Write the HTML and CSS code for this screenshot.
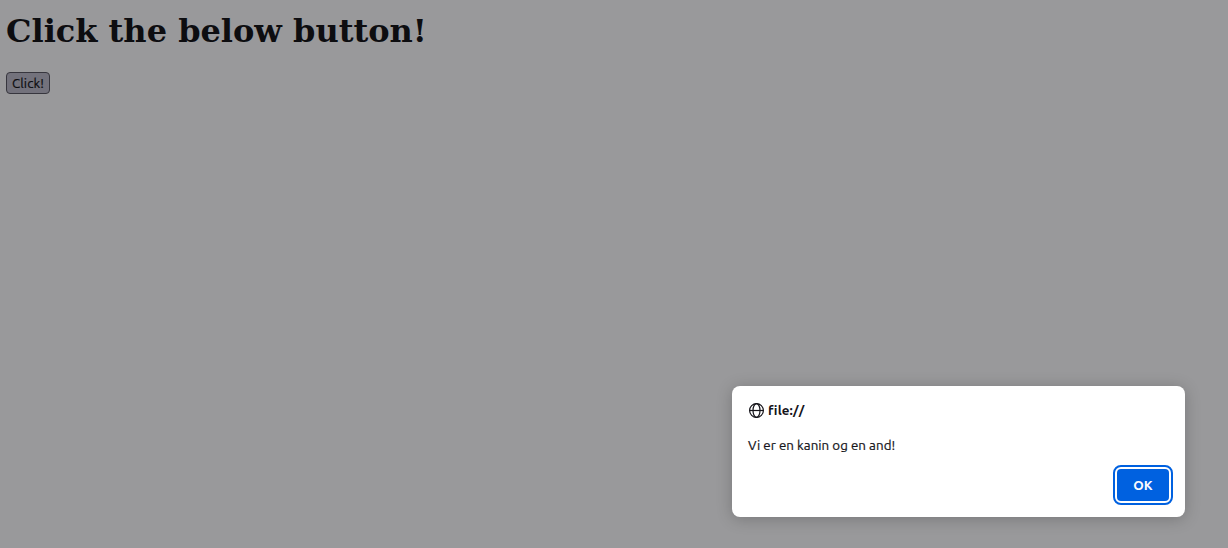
FILE: index.html
```html
<!DOCTYPE html>
<html lang="en">
<head>
<meta charset="utf-8">
<title>Click</title>
<link rel="stylesheet" href="styles.css">
</head>
<body>
<main class="page">
  <h1 class="title">Click the below button!</h1>
  <button class="click">Click!</button>
</main>
<div class="dialog" role="dialog">
  <div class="origin">
    <svg class="globe" viewBox="0 0 16 16" width="16" height="16" fill="none" stroke="#15141a" stroke-width="1.2">
      <circle cx="8.5" cy="8.5" r="6.9"/>
      <ellipse cx="8.5" cy="8.5" rx="3.5" ry="6.9"/>
      <path d="M1.6 8.5h13.8"/>
    </svg>
    <span class="host">file://</span>
  </div>
  <p class="message">Vi er en kanin og en and!</p>
  <div class="actions"><button class="ok">OK</button></div>
</div>
</body>
</html>
```
FILE: styles.css
```css
* { box-sizing: border-box; }
body {
  margin: 0;
  height: 548px;
  overflow: hidden;
  background: #99999b;
  color: #0d0d10;
  font-family: "DejaVu Serif", serif;
}
.page { padding: 12px 6px; }
.title {
  margin: 0 0 21px;
  font-size: 32px;
  line-height: 39px;
  font-weight: bold;
  white-space: nowrap;
}
.click {
  display: block;
  width: 44px;
  height: 22px;
  padding: 1px 0 0;
  border: 1px solid #37363e;
  border-radius: 4px;
  background: #73727c;
  color: #0d0d10;
  font: 13.333px/19px "Ubuntu", "Noto Sans", sans-serif;
  letter-spacing: .05px;
  -webkit-text-stroke: .2px;
  white-space: nowrap;
}
.dialog {
  position: absolute;
  left: 732px;
  top: 386px;
  width: 453px;
  height: 131px;
  padding: 15px 16px 16px;
  border-radius: 8px;
  background: #fff;
  box-shadow: 0 2px 16px rgba(0, 0, 0, .22);
  color: #15141a;
  font: 13.333px/18px "Ubuntu", "Noto Sans", sans-serif;
}
.origin {
  display: flex;
  align-items: center;
  gap: 4px;
  height: 18px;
  font-weight: bold;
}
.host {
  padding-top: 2px;
  letter-spacing: .1px;
}
.message {
  margin: 18px 0 14px;
  letter-spacing: .04px;
  -webkit-text-stroke: .2px;
}
.actions {
  display: flex;
  justify-content: flex-end;
}
.ok {
  width: 52px;
  height: 32px;
  padding: 2px 0 0;
  border: 0;
  border-radius: 4px;
  outline: 2px solid #0061e0;
  outline-offset: 2px;
  background: #0061e0;
  color: #fbfbfe;
  font: bold 13.333px/18px "Ubuntu", "Noto Sans", sans-serif;
  letter-spacing: .1px;
}
```
